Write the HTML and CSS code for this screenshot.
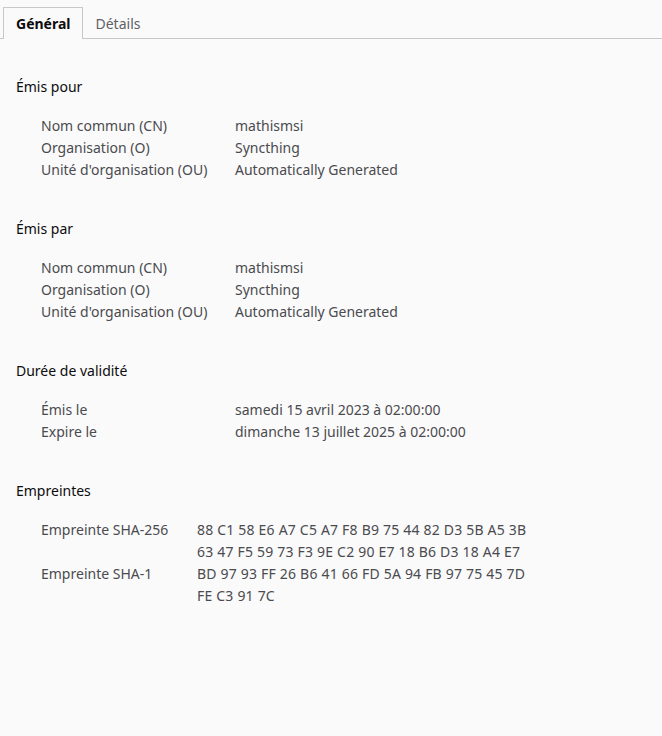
FILE: index.html
```html
<!DOCTYPE html>
<html lang="fr">
<head>
    <meta charset="UTF-8">
    <title>Certificat</title>
    <link rel="stylesheet" href="styles.css">
</head>
<body>
    <div class="tabs">
        <div class="tab active">Général</div>
        <div class="tab">Détails</div>
    </div>

    <div class="content">
        <div class="section">
            <h2>Émis pour</h2>
            <div class="fields">
                <div class="label">Nom commun (CN)</div><div class="value">mathismsi</div>
                <div class="label">Organisation (O)</div><div class="value">Syncthing</div>
                <div class="label">Unité d'organisation (OU)</div><div class="value">Automatically Generated</div>
            </div>
        </div>

        <div class="section">
            <h2>Émis par</h2>
            <div class="fields">
                <div class="label">Nom commun (CN)</div><div class="value">mathismsi</div>
                <div class="label">Organisation (O)</div><div class="value">Syncthing</div>
                <div class="label">Unité d'organisation (OU)</div><div class="value">Automatically Generated</div>
            </div>
        </div>

        <div class="section">
            <h2>Durée de validité</h2>
            <div class="fields">
                <div class="label">Émis le</div><div class="value">samedi 15 avril 2023 à 02:00:00</div>
                <div class="label">Expire le</div><div class="value">dimanche 13 juillet 2025 à 02:00:00</div>
            </div>
        </div>

        <div class="section">
            <h2>Empreintes</h2>
            <div class="fields narrow">
                <div class="label">Empreinte SHA-256</div>
                <div class="value hex"><span class="line">88 C1 58 E6 A7 C5 A7 F8 B9 75 44 82 D3 5B A5 3B</span><span class="line">63 47 F5 59 73 F3 9E C2 90 E7 18 B6 D3 18 A4 E7</span></div>
                <div class="label">Empreinte SHA-1</div>
                <div class="value hex"><span class="line">BD 97 93 FF 26 B6 41 66 FD 5A 94 FB 97 75 45 7D</span><span class="line">FE C3 91 7C</span></div>
            </div>
        </div>
    </div>
</body>
</html>
```

FILE: styles.css
```css
body {
    margin: 0;
    background: #fafafa;
    color: #0c0c0d;
    font-family: "Noto Sans", "Open Sans", sans-serif;
    font-size: 14px;
}

.tabs {
    display: flex;
    padding: 7px 0 0 3px;
    border-bottom: 1px solid #c8c8c8;
    height: 31px;
}

.tab {
    padding: 0 12px 0 12px;
    line-height: 31px;
    color: #5f5f65;
    border: 1px solid transparent;
    border-bottom: none;
    margin-bottom: -1px;
}

.tab.active {
    padding: 0 11px 0 12px;
    color: #0c0c0d;
    font-weight: bold;
    background: #fafafa;
    border-color: #c8c8c8;
    height: 32px;
    box-sizing: border-box;
}

.content {
    padding: 37px 0 0 16px;
}

.section {
    margin-bottom: 37px;
}

h2 {
    margin: 0 0 17px;
    font-size: 14px;
    font-weight: normal;
    line-height: 22px;
}

.fields {
    display: grid;
    grid-template-columns: 194px auto;
    margin-left: 25px;
    line-height: 22px;
    color: #4a4a4f;
}

.fields.narrow {
    grid-template-columns: 156px auto;
}

.hex {
    letter-spacing: 0.2px;
}

.line {
    display: block;
}
```
